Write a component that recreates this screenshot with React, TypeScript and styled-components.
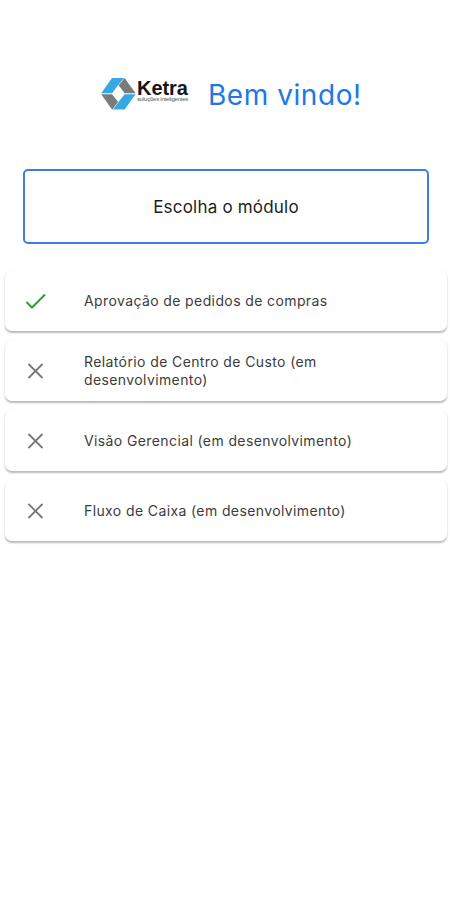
import React from "react";
import styled, { createGlobalStyle } from "styled-components";

const GlobalStyle = createGlobalStyle`
  *, *::before, *::after { box-sizing: border-box; }
  body { margin: 0; background: #fff; font-family: Inter, "Liberation Sans", sans-serif; }
`;

const Screen = styled.main`
  min-height: 900px;
  display: flex;
  flex-direction: column;
  background: #fff;
`;

const Header = styled.header`
  display: flex;
  align-items: flex-start;
  padding: 77px 0 0 101px;
  height: 169px;
`;

const Emblem = styled.svg`
  width: 35px;
  height: 34px;
  flex: none;
`;

const Brand = styled.div`
  display: flex;
  flex-direction: column;
  width: 72px;
  padding-left: 1px;
`;

const BrandName = styled.span`
  font: 700 20px/22px "Liberation Sans", Arial, sans-serif;
  letter-spacing: -0.05px;
  height: 19px;
  color: #151515;
`;

const BrandTagline = styled.span`
  font: 400 6px/7px "Liberation Sans", Arial, sans-serif;
  letter-spacing: -0.22px;
  color: #555;
  white-space: nowrap;
`;

const Welcome = styled.h1`
  margin: 0;
  font-size: 28px;
  line-height: 37px;
  font-weight: 400;
  letter-spacing: 0.55px;
  color: #2178e4;
  white-space: nowrap;
`;

const ModulePrompt = styled.h2`
  margin: 0 21px 0 23px;
  padding-top: 1px;
  height: 74.5px;
  display: flex;
  align-items: center;
  justify-content: center;
  border: 2px solid #3c7fdc;
  border-radius: 5px;
  font-size: 17px;
  font-weight: 420;
  letter-spacing: 0.2px;
  color: #1c1c1c;
`;

const ModuleList = styled.ul`
  list-style: none;
  margin: 26.5px 3px 0 5px;
  padding: 0;
  display: flex;
  flex-direction: column;
  gap: 9px;
`;

const ModuleCard = styled.li`
  height: 61px;
  display: flex;
  align-items: center;
  padding-left: 19px;
  border-radius: 7px;
  background: #fff;
  box-shadow: 0 1.5px 2px rgba(0, 0, 0, 0.28);
`;

const StateIcon = styled.svg<{ $ready: boolean }>`
  width: 24px;
  height: 24px;
  flex: none;
  fill: none;
  stroke: ${(p) => (p.$ready ? "#29a037" : "#777")};
  stroke-width: ${(p) => (p.$ready ? 2 : 1.8)};
`;

const ModuleName = styled.span`
  width: 280px;
  margin-left: 36px;
  font-size: 14px;
  line-height: 18px;
  letter-spacing: 0.39px;
  color: #3c3c3c;
`;

const modules = [
  { name: "Aprovação de pedidos de compras", ready: true },
  { name: "Relatório de Centro de Custo (em desenvolvimento)", ready: false },
  { name: "Visão Gerencial (em desenvolvimento)", ready: false },
  { name: "Fluxo de Caixa (em desenvolvimento)", ready: false },
];

function KetraEmblem() {
  return (
    <Emblem viewBox="0 0 35 34" aria-hidden="true">
      <path d="M11 1H23L17 8.3L11 16.2H0.2Z" fill="#36a9e3" />
      <path d="M23.6 1L34.6 16.2H23.6L17.6 8.3Z" fill="#797b7f" />
      <path d="M0.2 17.2H11L17 24.8L11.4 32.5H11Z" fill="#797b7f" />
      <path d="M34.6 17.2L23.6 32.5H12L17.6 24.8L23.6 17.2Z" fill="#36a9e3" />
    </Emblem>
  );
}

export default function App() {
  return (
    <Screen>
      <GlobalStyle />
      <Header>
        <KetraEmblem />
        <Brand>
          <BrandName>Ketra</BrandName>
          <BrandTagline>soluções inteligentes</BrandTagline>
        </Brand>
        <Welcome>Bem vindo!</Welcome>
      </Header>
      <ModulePrompt>Escolha o módulo</ModulePrompt>
      <ModuleList>
        {modules.map((m) => (
          <ModuleCard key={m.name}>
            <StateIcon $ready={m.ready} viewBox="0 0 24 24" aria-hidden="true">
              <path d={m.ready ? "M2.5 13L8 18.5L21 5.5" : "M4.5 5L18.5 19M18.5 5L4.5 19"} />
            </StateIcon>
            <ModuleName>{m.name}</ModuleName>
          </ModuleCard>
        ))}
      </ModuleList>
    </Screen>
  );
}
